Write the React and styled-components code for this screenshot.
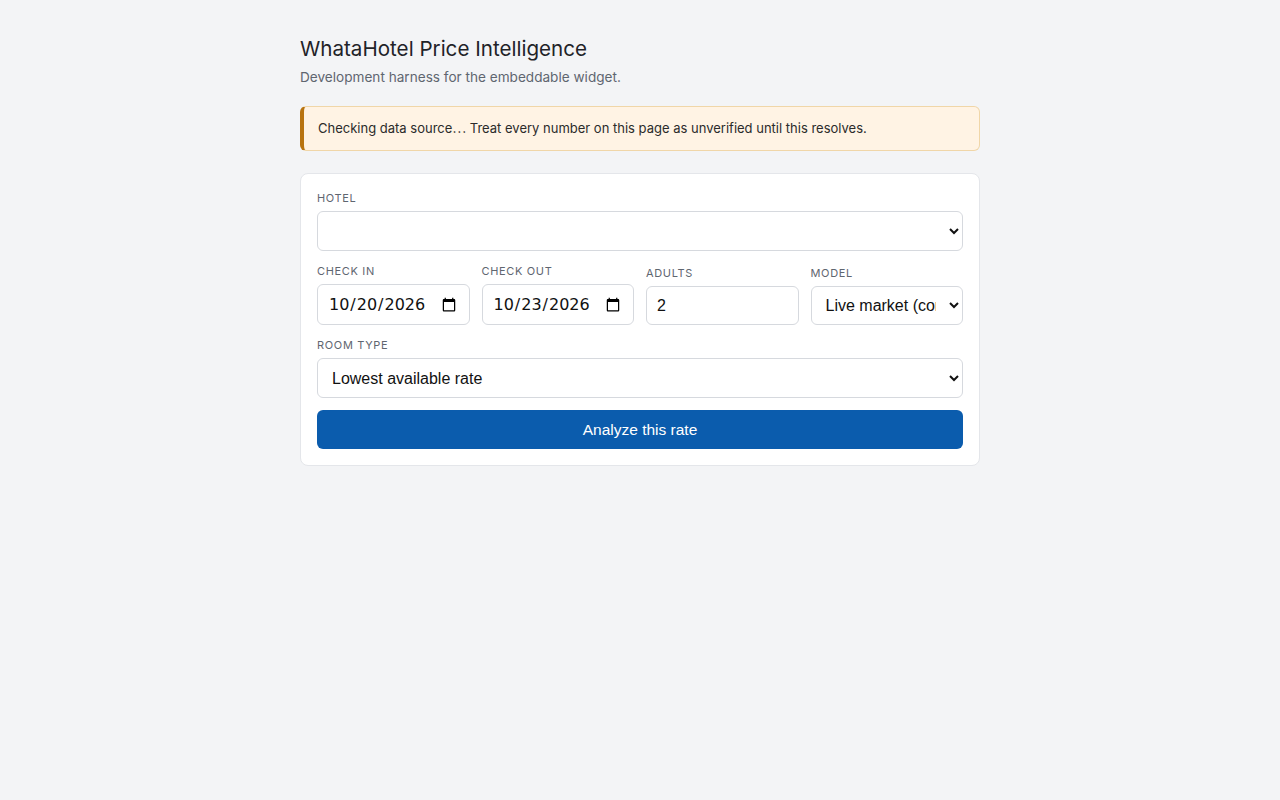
import React from 'react';
import styled, { createGlobalStyle } from 'styled-components';

const GlobalStyle = createGlobalStyle`
  html, body {
    margin: 0;
    padding: 0;
    background: #f3f4f6;
    font-family: Inter, "Noto Sans", "Noto Sans CJK SC", sans-serif;
    color: #111827;
  }
`;

const Page = styled.main`
  width: 680px;
  margin: 0 auto;
  padding: 33px 0 32px;
`;

const Title = styled.h1`
  margin: 0;
  font-size: 20.6px;
  font-weight: 400;
  line-height: 32px;
  color: #1f2328;
`;

const Subtitle = styled.p`
  margin: 0;
  font-size: 13.6px;
  line-height: 24px;
  color: #5f6670;
`;

const Banner = styled.div`
  margin-top: 17px;
  padding: 13px 14px;
  background: #fff3e4;
  border: 1px solid #f0d6a8;
  border-left: 4px solid #b8730f;
  border-radius: 6px;
  font-size: 13px;
  line-height: 17px;
  color: #2b2b2b;
`;

const Card = styled.section`
  margin-top: 22px;
  padding: 16px;
  background: #ffffff;
  border: 1px solid #e4e6ea;
  border-radius: 8px;
  display: flex;
  flex-direction: column;
  gap: 12px;
`;

const Row = styled.div`
  display: grid;
  grid-template-columns: repeat(4, 1fr);
  gap: 12px;
  align-items: end;
`;

const Field = styled.label`
  display: flex;
  flex-direction: column;
  gap: 5px;
  min-width: 0;
`;

const Label = styled.span`
  font-size: 11px;
  letter-spacing: 0.06em;
  text-transform: uppercase;
  color: #5f6670;
  line-height: 16px;
  padding-top: 1px;
  margin-top: -1px;
`;

const controlBase = `
  box-sizing: border-box;
  width: 100%;
  padding: 0 10px;
  background: #ffffff;
  border: 1px solid #d6d9de;
  border-radius: 6px;
  font-family: "Liberation Sans", Arial, sans-serif;
  font-size: 16px;
  color: #111;
`;

const Select = styled.select`
  ${controlBase}
  height: ${p => (p.$compact ? '39px' : '40px')};
`;

const Input = styled.input`
  ${controlBase}
  height: 39px;
`;

const DateInput = styled.input`
  ${controlBase}
  height: 41px;
  font-family: "DejaVu Sans", sans-serif;
`;

const Button = styled.button`
  height: 39px;
  border: none;
  border-radius: 6px;
  background: #0b5cad;
  color: #ffffff;
  font-family: "Liberation Sans", Arial, sans-serif;
  font-size: 15.5px;
  cursor: pointer;
`;

export default function App() {
  return (
    <>
      <GlobalStyle />
      <Page>
        <Title>WhataHotel Price Intelligence</Title>
        <Subtitle>Development harness for the embeddable widget.</Subtitle>
        <Banner>
          Checking data source⋯ Treat every number on this page as unverified until this resolves.
        </Banner>
        <Card>
          <Field>
            <Label>Hotel</Label>
            <Select defaultValue="">
              <option value=""></option>
            </Select>
          </Field>
          <Row>
            <Field>
              <Label>Check in</Label>
              <DateInput type="date" defaultValue="2026-10-20" />
            </Field>
            <Field>
              <Label>Check out</Label>
              <DateInput type="date" defaultValue="2026-10-23" />
            </Field>
            <Field>
              <Label>Adults</Label>
              <Input type="number" defaultValue="2" />
            </Field>
            <Field>
              <Label>Model</Label>
              <Select $compact defaultValue="live">
                <option value="live">Live market (comparables)</option>
              </Select>
            </Field>
          </Row>
          <Field>
            <Label>Room type</Label>
            <Select defaultValue="lowest">
              <option value="lowest">Lowest available rate</option>
            </Select>
          </Field>
          <Button type="button">Analyze this rate</Button>
        </Card>
      </Page>
    </>
  );
}
